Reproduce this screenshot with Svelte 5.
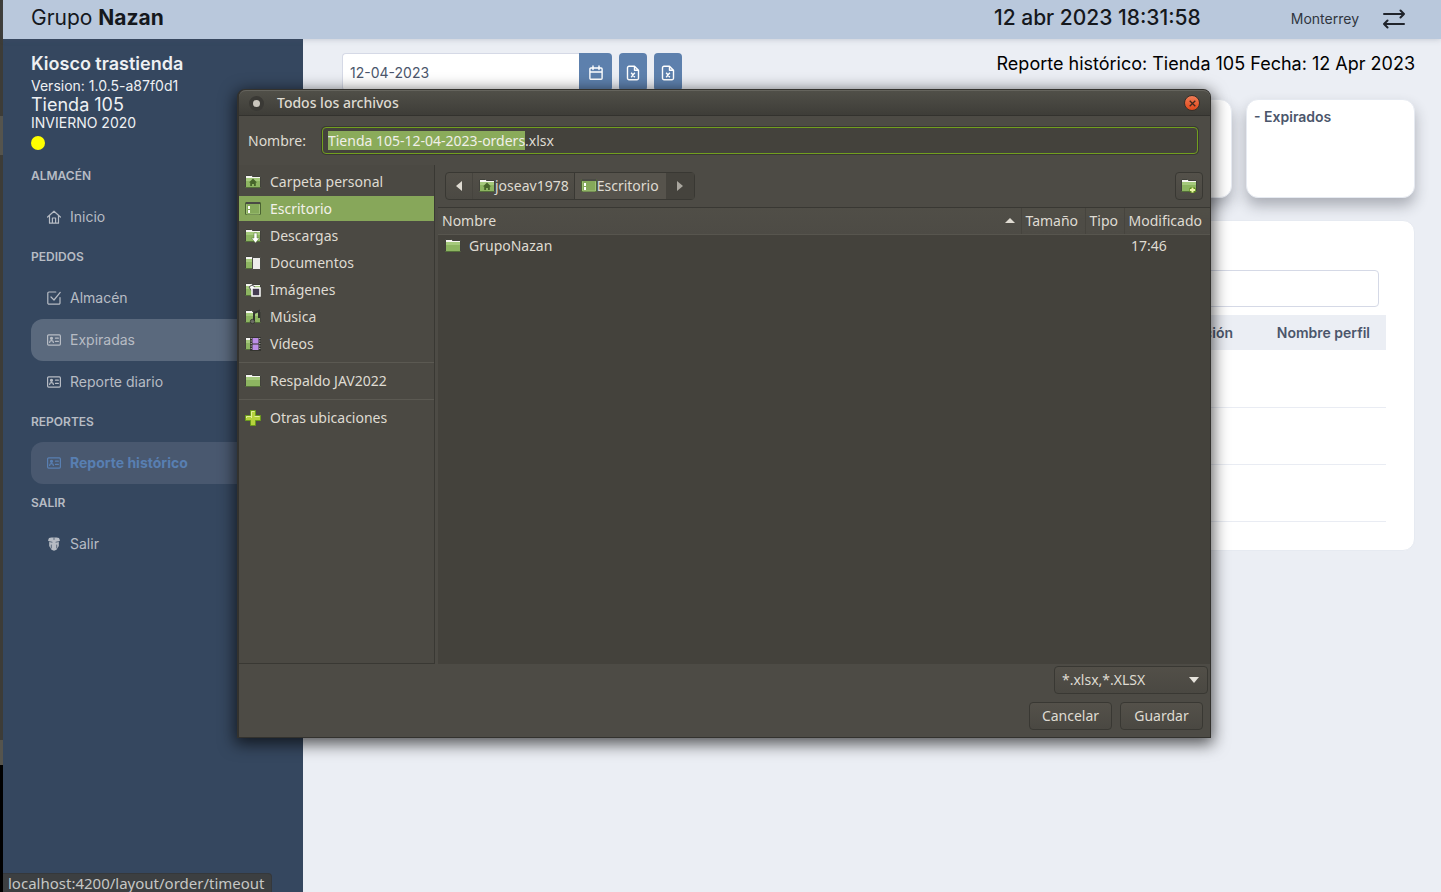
<script>
  import { onMount } from 'svelte';

  const menu = [
    { title: 'Almacén', items: [{ label: 'Inicio', icon: 'home' }] },
    {
      title: 'Pedidos',
      items: [
        { label: 'Almacén', icon: 'check' },
        { label: 'Expiradas', icon: 'id', state: 'hovered' },
        { label: 'Reporte diario', icon: 'id' }
      ]
    },
    { title: 'Reportes', items: [{ label: 'Reporte histórico', icon: 'id', state: 'active' }] },
    { title: 'Salir', items: [{ label: 'Salir', icon: 'shield' }] }
  ];

  const places = [
    [
      { label: 'Carpeta personal', kind: 'home' },
      { label: 'Escritorio', kind: 'desktop', selected: true },
      { label: 'Descargas', kind: 'download' },
      { label: 'Documentos', kind: 'documents' },
      { label: 'Imágenes', kind: 'pictures' },
      { label: 'Música', kind: 'music' },
      { label: 'Vídeos', kind: 'videos' }
    ],
    [{ label: 'Respaldo JAV2022', kind: 'folder' }],
    [{ label: 'Otras ubicaciones', kind: 'plus' }]
  ];

  let nameInput;
  let fileName = $state('Tienda 105-12-04-2023-orders.xlsx');

  onMount(() => {
    nameInput.focus();
    nameInput.setSelectionRange(0, fileName.lastIndexOf('.'));
  });
</script>

{#snippet menuIcon(kind)}
  <svg class="menu-icon" viewBox="0 0 14 14" fill="none" stroke="currentColor" stroke-width="1.200" stroke-linejoin="round" stroke-linecap="round" aria-hidden="true">
    {#if kind === 'home'}
      <path d="M.6 7 7 1.2 13.4 7M2.5 5.6v7.6h9V5.6M5.400 13V8h3.200v5" />
    {:else if kind === 'check'}
      <path d="M8.8 1H2a1.2 1.2 0 0 0-1.2 1.2v9.8A1.2 1.2 0 0 0 2 13.200h9.800a1.200 1.200 0 0 0 1.200-1.200V6.500M4 6l3 3 6.200-7.600" />
    {:else if kind === 'id'}
      <rect x=".6" y="1.900" width="12.800" height="10.200" rx="1" />
      <circle cx="4.500" cy="5.300" r="1" fill="currentColor" />
      <path d="M2.600 9.300c.3-2.200 3.500-2.200 3.800 0M8.500 5.200h2.800M8.500 8.400h2.800" stroke-width="1.300" />
    {:else}
      <path d="M2 1c3-.6 7-.6 10 0l1 2.500-1.200 1V9L9.500 12.800 7 13.700l-2.500-.9L2.200 9V4.500L1 3.500z" fill="currentColor" stroke="none" />
      <path d="M2.500 4.600 5 5.200M11.500 4.600 9 5.200M4.300 8v3M9.700 8v3M7 1v1.500" stroke="#35475f" stroke-width=".7" />
    {/if}
  </svg>
{/snippet}

{#snippet fileIcon()}
  <svg width="14" height="16" viewBox="0 0 14 16" fill="none" stroke="currentColor" stroke-width="1.400" stroke-linejoin="round" aria-hidden="true">
    <path d="M8.500 1.300H3A1.500 1.500 0 0 0 1.500 2.800v10.400A1.500 1.500 0 0 0 3 14.700h8a1.500 1.500 0 0 0 1.500-1.500V5.300zM8.500 1.300v4h4M5.200 7.800l3.600 4.400M8.800 7.800l-3.600 4.400" />
  </svg>
{/snippet}

{#snippet placeIcon(kind)}
  <svg class="place-icon" viewBox="0 0 16 16" aria-hidden="true">
    {#if kind === 'plus'}
      <path d="M5.500.5h5v5h5v5h-5v5h-5v-5h-5v-5h5z" fill="#b5d33d" stroke="#6b9a1c" />
      <path d="M6.500 8V1.500h3M1.500 8V6.500h5M9.500 6.500h5" fill="none" stroke="#e2f09a" />
    {:else if kind === 'desktop'}
      <rect x=".5" y="1.500" width="15" height="12" rx=".5" fill="#85a95a" stroke="#4b6332" />
      <path d="M1 2h14" stroke="#4a4a45" stroke-width="2" />
      <path d="M1.500 3.500v9.500h13V3.500" fill="none" stroke="#9fc077" />
      <path d="M3 5h2v3H3zM3 9h2v3H3z" fill="#fff" />
    {:else}
      <path d="M.5 1.500h6l1 1h8v11H.5z" fill="#f6f6f2" stroke="#41413b" />
      <path d="M1 4h14v9H1z" fill="#8db561" />
      <path d="M1 4h14v3H1z" fill="#a5c97c" />
      <path d="M.5 13.500h15" stroke="#54703a" />
      {#if kind === 'home'}
        <path d="M8 4.500l4 4h-1.200V12H9v-2H7v2H5.200V8.500H4z" fill="#47652b" />
      {:else if kind === 'download'}
        <path d="M9 5h3v5h2.500l-4 5-4-5H9z" fill="#fff" stroke="#54703a" stroke-width=".5" />
      {:else if kind === 'documents'}
        <path d="M7.500 2.500h8v12h-8z" fill="#ededeb" stroke="#4a4a45" />
      {:else if kind === 'pictures'}
        <path d="M4 5l3-2 3 2-2 6z" fill="#f5f5f5" stroke="#555" />
        <path d="M7 6h8v8H7z" fill="#453c52" stroke="#fff" stroke-width="1.500" />
      {:else if kind === 'music'}
        <path d="M9 12V4l5-2v7" fill="none" stroke="#33332f" stroke-width="2" />
        <circle cx="7.500" cy="12.500" r="2.200" fill="#6b6b65" stroke="#2d2d2a" stroke-width=".8" />
      {:else if kind === 'videos'}
        <path d="M5 1h11v14H5z" fill="#34342f" />
        <path d="M7.500 2h6v5.500h-6zM7.500 8.500h6V14h-6z" fill="#bd8ee8" />
        <path d="M6.200 2v12M14.800 2v12" stroke="#c9c9c2" stroke-dasharray="1 1.500" />
      {:else if kind === 'new'}
        <path d="M11.500 9v6M8.500 12h6" stroke="#5c8a1c" stroke-width="4" />
        <path d="M11.500 9.500v5M9 12h5" stroke="#ecf5a8" stroke-width="2" />
      {/if}
    {/if}
  </svg>
{/snippet}

<div class="desktop">
  <div class="edge"></div>
  <div class="app">
    <header class="topbar">
      <div class="brand">Grupo <b>Nazan</b></div>
      <time class="clock">12 abr 2023 18:31:58</time>
      <span class="city">Monterrey</span>
      <button class="swap" aria-label="Cambiar tienda">
        <svg width="22" height="20" viewBox="0 0 22 20" fill="none" stroke="#20242b" stroke-width="2" stroke-linecap="round" stroke-linejoin="round">
          <path d="M1 5h20M17.500 1.500 21 5l-3.500 3.500M21 15H1M4.500 11.500 1 15l3.500 3.500" />
        </svg>
      </button>
    </header>

    <div class="columns">
      <nav class="sidebar">
        <div class="store">
          <strong>Kiosco trastienda</strong>
          <span>Version: 1.0.5-a87f0d1</span>
          <span class="store-name">Tienda 105</span>
          <span class="season">INVIERNO 2020</span>
          <i class="status"></i>
        </div>
        {#each menu as group}
          <h2>{group.title}</h2>
          {#each group.items as item}
            <a href="#{item.label}" class={['menu-item', item.state]}>
              {@render menuIcon(item.icon)}
              {item.label}
            </a>
          {/each}
        {/each}
      </nav>

      <main>
        <div class="toolbar">
          <div class="date">
            <input type="text" value="12-04-2023" aria-label="Fecha" />
            <button aria-label="Calendario">
              <svg width="14" height="16" viewBox="0 0 14 16" fill="none" stroke="currentColor" stroke-width="1.400" stroke-linejoin="round" stroke-linecap="round">
                <path d="M1.900 3h10.200a1 1 0 0 1 1 1v9.300a1 1 0 0 1-1 1H1.900a1 1 0 0 1-1-1V4a1 1 0 0 1 1-1zM1 7h12M4 1v3.500M10 1v3.500" />
              </svg>
            </button>
          </div>
          <button class="export" aria-label="Exportar pedidos">{@render fileIcon()}</button>
          <button class="export" aria-label="Exportar detalle">{@render fileIcon()}</button>
          <h1>Reporte histórico: Tienda 105 Fecha: 12 Apr 2023</h1>
        </div>

        <div class="cards">
          {#each Array(5) as _}
            <section class="card"></section>
          {/each}
          <section class="card">- Expirados</section>
        </div>

        <section class="panel">
          <input class="search" type="text" aria-label="Buscar" />
          <table class="report">
            <thead>
              <tr><th>Descripción</th><th class="profile">Nombre perfil</th></tr>
            </thead>
            <tbody>
              {#each Array(3) as _}
                <tr><td></td><td></td></tr>
              {/each}
            </tbody>
          </table>
        </section>
      </main>
    </div>
  </div>

  <div class="link-status">localhost:4200/layout/order/timeout</div>

  <div class="dialog" role="dialog" aria-labelledby="dialog-title">
    <div class="titlebar">
      <i class="window-dot"></i>
      <span id="dialog-title">Todos los archivos</span>
      <button class="close" aria-label="Cerrar">
        <svg width="7" height="7" viewBox="0 0 7 7" stroke="#40281e" stroke-width="1.300"><path d="M.7.7l5.600 5.600M6.300.7.7 6.300" /></svg>
      </button>
    </div>

    <div class="name-row">
      <label for="file-name">Nombre:</label>
      <input id="file-name" type="text" spellcheck="false" bind:this={nameInput} bind:value={fileName} />
    </div>

    <div class="browser">
      <div class="places">
        {#each places as group}
          <div class="place-group">
            {#each group as place}
              <button class={['place', place.selected && 'selected']}>
                {@render placeIcon(place.kind)}
                {place.label}
              </button>
            {/each}
          </div>
        {/each}
      </div>

      <div class="files">
        <div class="path-row">
          <div class="path">
            <button class="arrow" aria-label="Atrás"><svg width="6" height="10" viewBox="0 0 6 10"><path d="M6 0v10L0 5z" fill="#dfdbd2" /></svg></button>
            <button class="crumb">{@render placeIcon('home')}joseav1978</button>
            <button class="crumb current">{@render placeIcon('desktop')}Escritorio</button>
            <button class="arrow next" aria-label="Adelante"><svg width="6" height="10" viewBox="0 0 6 10"><path d="M0 0v10l6-5z" fill="#aaa79f" /></svg></button>
          </div>
          <button class="new-folder" aria-label="Crear carpeta">{@render placeIcon('new')}</button>
        </div>
        <div class="list">
          <table>
            <colgroup><col /><col class="size" /><col class="type" /><col class="modified" /></colgroup>
            <thead>
              <tr>
                <th><span class="sorted">Nombre <svg width="10" height="5" viewBox="0 0 10 5"><path d="M0 5h10L5 0z" fill="#dfdbd2" /></svg></span></th>
                <th>Tamaño</th>
                <th>Tipo</th>
                <th>Modificado</th>
              </tr>
            </thead>
            <tbody>
              <tr>
                <td><span class="file">{@render placeIcon('folder')}GrupoNazan</span></td>
                <td></td>
                <td></td>
                <td class="time">17:46</td>
              </tr>
            </tbody>
          </table>
        </div>
      </div>
    </div>

    <div class="filter-row">
      <div class="filter">
        <select aria-label="Tipo de archivo"><option>*.xlsx,*.XLSX</option></select>
        <svg width="10" height="6" viewBox="0 0 10 6"><path d="M0 0h10L5 6z" fill="#e6e3dc" /></svg>
      </div>
    </div>
    <div class="actions">
      <button>Cancelar</button>
      <button>Guardar</button>
    </div>
  </div>
</div>

<style>
  :global(body) {
    margin: 0;
    background: #ebeef4;
  }
  * {
    box-sizing: border-box;
  }
  button,
  input,
  select {
    font: inherit;
    color: inherit;
    margin: 0;
    padding: 0;
    border: 0;
    background: none;
    outline: none;
  }
  svg {
    flex: none;
    display: block;
  }
  .desktop {
    position: relative;
    display: flex;
    min-height: 100vh;
    overflow: hidden;
    font: 14px/20px Inter, sans-serif;
    color: #4b566b;
  }
  .edge {
    width: 3px;
    background: linear-gradient(#3d3c37 116px, #55544d 116px, #55544d 155px, #3d3c37 155px, #3d3c37 740px, #55544d 740px, #55544d 765px, #000 765px);
  }
  .app {
    flex: 1;
    display: flex;
    flex-direction: column;
  }
  .topbar {
    z-index: 1;
    display: flex;
    align-items: center;
    height: 39px;
    padding: 0 36px 3px 28px;
    background: #b9c8dc;
    box-shadow: 0 0 6px rgba(80, 90, 110, 0.3);
    color: #15181d;
    font-size: 21px;
  }
  .brand {
    margin-right: auto;
  }
  .brand b {
    font-weight: 700;
  }
  .clock {
    font-weight: 500;
  }
  .city {
    margin: 2px 24px 0 90px;
    font-size: 14px;
    color: #30363f;
  }
  .swap {
    padding-top: 2px;
  }
  .columns {
    flex: 1;
    display: flex;
  }
  .sidebar {
    width: 300px;
    padding: 13px 28px;
    background: #35475f;
    color: #b7bcc4;
  }
  .store {
    display: flex;
    flex-direction: column;
    margin-bottom: 7px;
    color: #eef0f3;
  }
  .store strong {
    font-size: 18px;
    line-height: 24px;
    font-weight: 600;
  }
  .store-name {
    font-size: 18px;
    line-height: 18px;
  }
  .season {
    line-height: 18px;
  }
  .status {
    width: 14px;
    height: 14px;
    margin-top: 4px;
    border-radius: 50%;
    background: #ff0;
  }
  h2 {
    margin: 0;
    padding: 11px 0 12px;
    font-size: 12px;
    line-height: 16px;
    font-weight: 600;
    text-transform: uppercase;
  }
  .menu-item {
    display: flex;
    align-items: center;
    gap: 9px;
    height: 42px;
    padding: 0 16px;
    border-radius: 12px;
    color: inherit;
    text-decoration: none;
  }
  .menu-icon {
    width: 14px;
    height: 14px;
  }
  .hovered {
    background: #5a697d;
  }
  .active {
    background: #49586f;
    color: #587fb2;
    font-weight: 700;
  }
  main {
    flex: 1;
    padding: 14px 26px 28px 28px;
  }
  .toolbar {
    display: flex;
    gap: 7px;
    height: 38px;
    padding-left: 11px;
  }
  .date {
    display: flex;
    width: 270px;
  }
  .date input {
    flex: 1;
    min-width: 0;
    padding: 2px 7px 0;
    border: 1px solid #d5d9e6;
    border-right: 0;
    border-radius: 4px 0 0 4px;
    background: #fff;
  }
  .toolbar button {
    display: grid;
    place-items: center;
    width: 28px;
    padding-top: 2px;
    border-radius: 4px;
    background: #5d80ad;
    color: #fff;
  }
  .toolbar .date button {
    width: 33px;
    border-radius: 0 4px 4px 0;
  }
  h1 {
    margin: 0 0 0 auto;
    font-size: 18px;
    line-height: 22px;
    font-weight: 400;
    color: #000;
  }
  .cards {
    display: grid;
    grid-template-columns: repeat(6, 1fr);
    gap: 14px;
    margin: 8px 0 22px;
  }
  .card {
    height: 99px;
    padding: 7px;
    border: 1px solid #e6eaf1;
    border-radius: 12px;
    background: #fff;
    box-shadow: 0 8px 14px rgba(40, 45, 55, 0.32);
    font-weight: 600;
  }
  .panel {
    padding: 49px 28px 28px;
    border: 1px solid #e6eaf1;
    border-radius: 12px;
    background: #fff;
  }
  .search {
    display: block;
    width: calc(100% - 14px);
    height: 37px;
    margin: 0 7px 8px;
    border: 1px solid #d5d9e6;
    border-radius: 4px;
  }
  table {
    width: 100%;
    border-collapse: collapse;
  }
  .report th {
    height: 35px;
    padding: 0 16px;
    background: #ebeef4;
    font-weight: 600;
    text-align: right;
  }
  .report .profile {
    width: 137px;
    white-space: nowrap;
  }
  .report td {
    height: 57px;
    border-bottom: 1px solid #e9ecf3;
  }

  .link-status {
    position: absolute;
    left: 3px;
    bottom: 0;
    padding: 0 6px 0 5px;
    border: 1px solid #35383b;
    border-width: 1px 1px 0 0;
    border-radius: 0 4px 0 0;
    background: #3c3f41;
    color: #c6c7c5;
    font: 15px/18px "Noto Sans", sans-serif;
  }

  .dialog {
    position: absolute;
    z-index: 2;
    left: 237px;
    right: 230px;
    top: 89px;
    padding-bottom: 7px;
    border: 1px solid #33322e;
    border-left-width: 2px;
    border-radius: 8px 8px 0 0;
    background: #4d4b45;
    box-shadow: 0 4px 16px 2px rgba(0, 0, 0, 0.65);
    color: #dfdbd2;
    font: 14px/20px "Noto Sans", sans-serif;
  }
  .titlebar {
    display: flex;
    align-items: center;
    gap: 13px;
    height: 26px;
    padding: 0 10px;
    border-top: 1px solid #65645d;
    border-bottom: 1px solid #33322e;
    border-radius: 7px 7px 0 0;
    background: linear-gradient(#504f48, #3e3d38);
    font-weight: 500;
  }
  .window-dot {
    width: 15px;
    height: 15px;
    border: 4px solid #3a3935;
    border-radius: 50%;
    background: #c9c5bd;
  }
  .close {
    display: grid;
    place-items: center;
    width: 16px;
    height: 16px;
    margin-left: auto;
    border: 1px solid #3a3029;
    border-radius: 50%;
    background: linear-gradient(#f07c56, #e0481a);
  }
  .name-row {
    display: flex;
    align-items: center;
    gap: 16px;
    padding: 11px 12px 11px 9px;
  }
  .name-row input {
    flex: 1;
    height: 27px;
    padding: 0 5px;
    border: 1px solid #729f1f;
    border-radius: 4px;
    background: #44423c;
    box-shadow: 0 0 0 1px #393833;
    line-height: 18px;
  }
  .name-row input::selection {
    background: #8aab5a;
    color: #f0efe9;
  }
  .browser {
    display: flex;
    min-height: 499px;
  }
  .places {
    width: 196px;
    padding-top: 3px;
    border-right: 1px solid #393833;
    border-bottom: 1px solid #393833;
    background: #4b4943;
  }
  .place-group + .place-group {
    margin-top: 5px;
    padding-top: 4px;
    border-top: 1px solid #5b5952;
  }
  .place {
    display: flex;
    align-items: center;
    gap: 9px;
    width: 100%;
    height: 27px;
    padding: 0 6px;
    border: 0 solid transparent;
    border-width: 1px 0;
    background-clip: padding-box;
  }
  .place.selected {
    background-color: #87a75a;
    color: #f3f1ea;
  }
  .place-icon {
    width: 16px;
    height: 16px;
  }
  .files {
    flex: 1;
    display: flex;
    flex-direction: column;
    padding-left: 3px;
  }
  .path-row {
    display: flex;
    justify-content: space-between;
    padding: 7px;
  }
  .path {
    display: flex;
    height: 28px;
    border: 1px solid #393833;
    border-radius: 4px;
    background: linear-gradient(#524f48, #4b4943);
  }
  .path button {
    display: flex;
    align-items: center;
  }
  .path .arrow {
    justify-content: center;
    width: 26px;
  }
  .path .crumb {
    padding: 0 5px 0 6px;
    border-left: 1px solid #46443e;
  }
  .path .current {
    padding-right: 7px;
    background: #56534c;
    border-left-color: #393833;
  }
  .path .next {
    width: 28px;
    background: #45433d;
  }
  .new-folder {
    display: grid;
    place-items: center;
    width: 28px;
    height: 28px;
    border: 1px solid #393833;
    border-radius: 4px;
    background: linear-gradient(#54514a, #4b4943);
  }
  .list {
    flex: 1;
    border-top: 1px solid #393833;
    background: #44423c;
  }
  .list table {
    table-layout: fixed;
  }
  .list th {
    height: 26px;
    padding: 0 4px;
    border-right: 1px solid #46443e;
    border-bottom: 1px solid #57554e;
    background: linear-gradient(#504e47, #4d4b45);
    font-weight: 400;
    text-align: left;
  }
  .list th:last-child {
    border-right: 0;
  }
  .size {
    width: 64px;
  }
  .type {
    width: 39px;
  }
  .modified {
    width: 86px;
  }
  .sorted {
    display: flex;
    align-items: center;
    justify-content: space-between;
    padding-right: 2px;
  }
  .list td {
    height: 23px;
    padding: 0 7px;
  }
  .file {
    display: flex;
    align-items: center;
    gap: 8px;
  }
  .filter-row {
    display: flex;
    justify-content: flex-end;
    padding: 2px 2px 8px;
  }
  .filter {
    display: flex;
    align-items: center;
    width: 154px;
    height: 28px;
    padding-right: 8px;
    border: 1px solid #393833;
    border-radius: 4px;
    background: linear-gradient(#524f48, #4a4842);
  }
  .filter select {
    flex: 1;
    height: 100%;
    padding: 0 7px;
    appearance: none;
  }
  .actions {
    display: flex;
    justify-content: flex-end;
    gap: 8px;
    padding-right: 7px;
  }
  .actions button {
    width: 83px;
    height: 28px;
    border: 1px solid #393833;
    border-radius: 4px;
    background: linear-gradient(#54514a, #4a4842);
  }
</style>
